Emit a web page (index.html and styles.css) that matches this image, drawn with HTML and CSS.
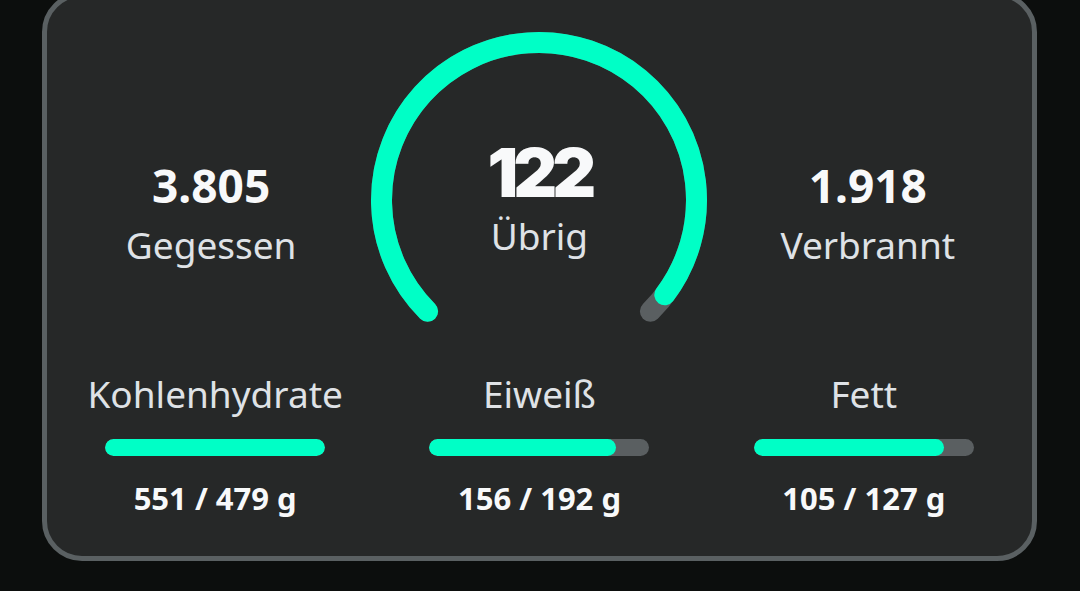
FILE: index.html
```html
<!DOCTYPE html>
<html lang="de">
<head>
<meta charset="utf-8">
<title>Kalorien</title>
<link rel="stylesheet" href="styles.css">
</head>
<body>
<section class="card">
  <div class="top-row">
    <div class="stat">
      <div class="stat-value">3.805</div>
      <div class="stat-label">Gegessen</div>
    </div>
    <div class="gauge">
      <svg class="gauge-svg" width="340" height="300" viewBox="0 0 340 300">
        <path d="M 58.63 281.37 A 157.5 157.5 0 1 1 281.37 281.37" fill="none" stroke="#5a5f61" stroke-width="21" stroke-linecap="round"/>
        <path d="M 58.63 281.37 A 157.5 157.5 0 1 1 295.79 264.79" fill="none" stroke="#00ffc6" stroke-width="21" stroke-linecap="round"/>
      </svg>
      <div class="gauge-text">
        <div class="gauge-value">122</div>
        <div class="gauge-label">Übrig</div>
      </div>
    </div>
    <div class="stat">
      <div class="stat-value">1.918</div>
      <div class="stat-label">Verbrannt</div>
    </div>
  </div>
  <div class="macro-row">
    <div class="macro">
      <div class="macro-label">Kohlenhydrate</div>
      <div class="bar"><div class="bar-fill" style="width:100%"></div></div>
      <div class="macro-value">551 / 479 g</div>
    </div>
    <div class="macro">
      <div class="macro-label">Eiweiß</div>
      <div class="bar"><div class="bar-fill" style="width:85%"></div></div>
      <div class="macro-value">156 / 192 g</div>
    </div>
    <div class="macro">
      <div class="macro-label">Fett</div>
      <div class="bar"><div class="bar-fill" style="width:86.5%"></div></div>
      <div class="macro-value">105 / 127 g</div>
    </div>
  </div>
</section>
</body>
</html>
```

FILE: styles.css
```css
html, body {
  margin: 0;
  padding: 0;
  background: #0c0e0d;
  height: 100%;
  overflow: hidden;
}

body {
  font-family: "Noto Sans", "Open Sans", sans-serif;
  color: #f8f9fa;
}

.card {
  box-sizing: border-box;
  width: 995px;
  height: 569px;
  margin: -8px 0 0 42px;
  background: #262828;
  border: 5px solid #5a6062;
  border-radius: 40px;
  padding-top: 33px;
}

.top-row {
  display: grid;
  grid-template-columns: repeat(3, minmax(0, 1fr));
  align-items: start;
}

.stat {
  display: flex;
  flex-direction: column;
  align-items: center;
  margin-top: 132px;
}

.stat-value {
  font-size: 46px;
  font-weight: 700;
  line-height: 1;
  color: #f8f9fa;
}

.stat-label {
  margin-top: 18px;
  font-size: 37px;
  line-height: 1;
  color: #dfe2e6;
}

.gauge {
  position: relative;
  width: 340px;
  height: 300px;
  margin: 0 -6px;
}

.gauge-svg {
  display: block;
}

.gauge-text {
  position: absolute;
  top: 108px;
  left: 0;
  right: 0;
  display: flex;
  flex-direction: column;
  align-items: center;
}

.gauge-value {
  font-family: Inter, "Noto Sans", sans-serif;
  font-size: 68px;
  font-weight: 900;
  line-height: 1;
  letter-spacing: -5px;
  color: #f8f9fa;
}

.gauge-label {
  margin-top: 11px;
  font-size: 37px;
  line-height: 1;
  color: #dfe2e6;
}

.macro-row {
  display: grid;
  grid-template-columns: repeat(3, minmax(0, 1fr));
  padding: 0 6px;
  margin-top: 45px;
}

.macro {
  display: flex;
  flex-direction: column;
  align-items: center;
}

.macro-label {
  font-size: 37px;
  line-height: 1;
  color: #dfe2e6;
}

.bar {
  margin-top: 27px;
  width: 220px;
  height: 17px;
  border-radius: 9px;
  background: #5a5f61;
  overflow: hidden;
}

.bar-fill {
  height: 100%;
  border-radius: 9px;
  background: #00ffc6;
}

.macro-value {
  margin-top: 27px;
  font-size: 31px;
  font-weight: 700;
  line-height: 1;
  color: #f8f9fa;
}
```
